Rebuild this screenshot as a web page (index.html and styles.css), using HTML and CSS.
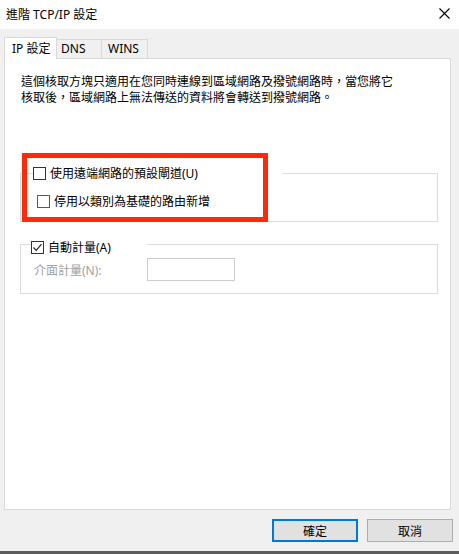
FILE: index.html
```html
<!DOCTYPE html>
<html lang="zh-Hant">
<head>
<meta charset="utf-8">
<link rel="stylesheet" href="styles.css">
</head>
<body>
<div class="dialog">
  <div class="titlebar">
    <span class="title">進階 TCP/IP 設定</span>
    <svg class="close" width="11" height="11" viewBox="0 0 11 11"><path d="M0.5 0.5 L10.5 10.5 M10.5 0.5 L0.5 10.5" stroke="#000" stroke-width="1.1" fill="none"/></svg>
  </div>
  <div class="content">
    <div class="tabs">
      <div class="tab active">IP 設定</div>
      <div class="tab dns">DNS</div>
      <div class="tab wins">WINS</div>
    </div>
    <div class="panel">
      <p class="desc">這個核取方塊只適用在您同時連線到區域網路及撥號網路時，當您將它<br>核取後，區域網路上無法傳送的資料將會轉送到撥號網路。</p>

      <div class="group group1">
        <div class="legend legend1">
          <span class="cb"></span>
          <span>使用遠端網路的預設閘道(U)</span>
        </div>
        <div class="row row-sub">
          <span class="cb blue"></span>
          <span>停用以類別為基礎的路由新增</span>
        </div>
      </div>

      <div class="group group2">
        <div class="legend legend2">
          <span class="cb checked"><svg width="11" height="11" viewBox="0 0 11 11"><path d="M1.5 5.5 L4.2 8.3 L9.5 2.2" stroke="#222" stroke-width="1.2" fill="none"/></svg></span>
          <span>自動計量(A)</span>
        </div>
        <div class="row row-metric">
          <span class="disabled-label">介面計量(N):</span>
          <span class="input"></span>
        </div>
      </div>

      <div class="highlight"></div>
    </div>
    <div class="buttons">
      <div class="btn default">確定</div>
      <div class="btn">取消</div>
    </div>
  </div>
  <div class="taskstrip"></div>
</div>
</body>
</html>
```

FILE: styles.css
```css
* { box-sizing: border-box; }
html, body { margin: 0; padding: 0; }
body {
  background: #f0f0f0;
  font-family: "Noto Sans", "Noto Sans CJK TC", sans-serif;
  font-size: 12px;
  color: #000;
  width: 459px;
  height: 554px;
  overflow: hidden;
}
.dialog { display: flex; flex-direction: column; height: 554px; }
.titlebar {
  height: 29px;
  background: #fff;
  display: flex;
  align-items: center;
  justify-content: space-between;
  padding: 0 9px 0 6px;
}
.title { line-height: 29px; }
.close { margin-top: -2px; }
.content { padding: 0 6px 0 4px; flex: 1; }
.tabs {
  margin-top: 8px;
  height: 21px;
  display: flex;
  align-items: flex-end;
}
.tab {
  height: 19px;
  line-height: 18px;
  border: 1px solid #d9d9d9;
  border-bottom: none;
  background: #f0f0f0;
  margin-left: -1px;
}
.tab.active {
  height: 22px;
  line-height: 21px;
  width: 53px;
  margin-left: 0;
  margin-bottom: -1px;
  background: #fff;
  padding-left: 7px;
  position: relative;
  z-index: 1;
}
.tab.dns { width: 46px; padding-left: 4px; }
.tab.wins { width: 47px; padding-left: 6px; }
.panel {
  position: relative;
  width: 447px;
  height: 452px;
  background: #fff;
  border: 1px solid #d9d9d9;
  padding-left: 16px;
}
.desc {
  margin: 14px 0 0 0;
  line-height: 16px;
  font-family: "Noto Sans CJK TC", sans-serif;
}
.group {
  border: 1px solid #dcdcdc;
  margin-left: -1px;
  width: 418px;
}
.group1 { margin-top: 68px; height: 49px; }
.group2 { margin-top: 22px; height: 50px; }
.legend {
  display: flex;
  align-items: center;
  gap: 4px;
  height: 13px;
  background: #fff;
  line-height: 13px;
}
.legend1 { margin-top: -7px; margin-left: 12px; width: 249px; }
.legend2 { margin-top: -4px; margin-left: 10px; width: 116px; }
.cb {
  width: 13px;
  height: 13px;
  border: 1px solid #333;
  background: #fff;
  display: inline-flex;
  align-items: center;
  justify-content: center;
  flex: none;
}
.cb.blue { border-color: #2566a8; }
.row { display: flex; align-items: center; }
.row-sub { margin-top: 15px; margin-left: 16px; gap: 4px; height: 13px; line-height: 13px; }
.row-metric { margin-top: 4px; margin-left: 13px; height: 23px; }
.disabled-label { color: #a0a0a0; width: 113px; }
.input {
  width: 88px;
  height: 23px;
  border: 1px solid #cccccc;
  background: #fff;
}
.highlight {
  position: absolute;
  left: 17px;
  top: 94px;
  width: 246px;
  height: 69px;
  border: 5px solid #ff2a0a;
}
.buttons {
  display: flex;
  justify-content: flex-end;
  gap: 9px;
  margin-top: 9px;
}
.btn {
  width: 86px;
  height: 23px;
  border: 1px solid #adadad;
  background: #e1e1e1;
  display: flex;
  align-items: center;
  justify-content: center;
}
.btn.default { border: 2px solid #0078d7; }
.taskstrip { height: 3px; background: #5c5c5c; }
```
